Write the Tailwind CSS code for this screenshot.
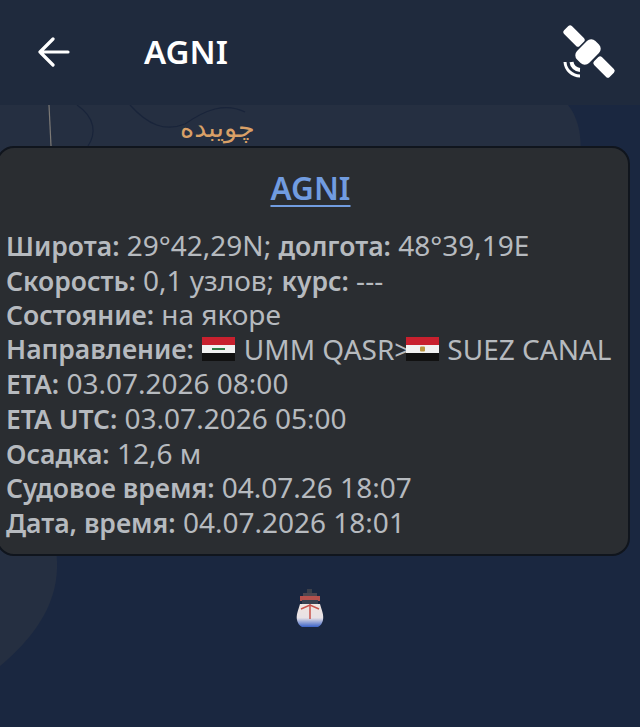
<!DOCTYPE html>
<html lang="ru">
<head>
    <meta charset="UTF-8">
    <meta name="viewport" content="width=device-width, initial-scale=1.0">
    <title>AGNI</title>
    <script src="https://cdn.jsdelivr.net/npm/@tailwindcss/browser@4"></script>
</head>
<body class="bg-[#1a2740] font-['Noto_Sans',sans-serif]">
    <div class="relative w-[640px] h-[727px] overflow-hidden">
        <!-- map -->
        <div class="absolute inset-0">
            <svg class="absolute left-0 top-0" width="640" height="727" viewBox="0 0 640 727" fill="none">
                <path d="M0 105H568C580 120 582 140 580 160L0 160Z" fill="#252f41"/>
                <path d="M0 550H56C60 580 55 620 0 666Z" fill="#252f41"/>
                <path d="M49 105L51 146" stroke="#7d7a76" stroke-width="1.2"/>
                <path d="M77 105C96 118 96 134 88 146" stroke="#19243a" stroke-width="1.2"/>
                <path d="M130 105C148 125 165 132 185 124C205 110 225 102 245 112" stroke="#19243a" stroke-width="1.2"/>
            </svg>
            <span class="absolute left-[180px] top-[111px] text-[27px] leading-[34px] text-[#d9a067] font-['DejaVu_Sans',sans-serif]">چویبده</span>
        </div>

        <!-- top bar -->
        <header class="absolute left-0 top-0 w-full h-[105px] bg-[#1f2a3d] flex items-center pl-[38px] pr-[24px] pb-[2px]">
            <svg width="32" height="30" viewBox="0 0 32 30" fill="none" stroke="white" stroke-width="3.2" stroke-linecap="round" stroke-linejoin="round">
                <path d="M30 15H2M15 2L2 15L15 28"/>
            </svg>
            <h1 class="ml-[74px] text-[33px] leading-none font-semibold text-white">AGNI</h1>
            <svg class="ml-auto" width="54" height="54" viewBox="0 0 54 54" fill="white">
                <rect x="-11" y="-5.500" width="22" height="11" rx="2.500" transform="translate(12 11) rotate(45)"/>
                <rect x="-13" y="-8.500" width="26" height="17" rx="6" transform="translate(26 27) rotate(-45)"/>
                <rect x="-11" y="-5.500" width="22" height="11" rx="2.500" transform="translate(42 42) rotate(45)"/>
                <path d="M3 37A15 15 0 0 0 18 51" fill="none" stroke="white" stroke-width="3"/>
                <path d="M9.500 37A9 9 0 0 0 18 45" fill="none" stroke="white" stroke-width="4"/>
            </svg>
        </header>

        <!-- vessel card -->
        <section class="absolute left-[-4px] top-[146px] w-[634px] h-[410px] rounded-[18px] bg-[#2a2d31] border-2 border-[#10151d] pl-[8px] pt-[18px] text-[#b6babf] text-[28px] leading-[34.600px] whitespace-nowrap">
            <h2 class="text-center pr-[13px] text-[31.500px] leading-[44px] font-semibold text-[#719ce0] underline underline-offset-[5px] decoration-2 mb-[18px]">AGNI</h2>
            <p><b class="text-[26.500px] leading-none font-semibold">Широта:</b> 29°42,29N; <b class="text-[26.500px] leading-none font-semibold">долгота:</b> 48°39,19E</p>
            <p><b class="text-[26.500px] leading-none font-semibold">Скорость:</b> 0,1 узлов; <b class="text-[26.500px] leading-none font-semibold">курс:</b> ---</p>
            <p><b class="text-[26.500px] leading-none font-semibold">Состояние:</b> на якоре</p>
            <p class="flex items-center"><b class="text-[26.500px] leading-none font-semibold">Направление:</b>
                <svg class="ml-[8px] mr-[9px] blur-[0.4px]" width="33" height="24" viewBox="0 0 33 24">
                    <rect width="33" height="8" fill="#c8202e"/><rect y="8" width="33" height="8" fill="#f1f1f1"/><rect y="16" width="33" height="8" fill="#111"/>
                    <rect x="10" y="11" width="13" height="2" fill="#2f7a44"/>
                </svg>
                <span class="mr-[-4px]">UMM QASR&gt;</span>
                <svg class="mr-[8px] blur-[0.4px]" width="33" height="24" viewBox="0 0 33 24">
                    <rect width="33" height="8" fill="#c8202e"/><rect y="8" width="33" height="8" fill="#f1f1f1"/><rect y="16" width="33" height="8" fill="#111"/>
                    <rect x="14" y="9.500" width="5" height="5" rx="1" fill="#b9963f"/>
                </svg>
                <span>SUEZ CANAL</span>
            </p>
            <p><b class="text-[26.500px] leading-none font-semibold">ETA:</b> 03.07.2026 08:00</p>
            <p><b class="text-[26.500px] leading-none font-semibold">ETA UTC:</b> 03.07.2026 05:00</p>
            <p><b class="text-[26.500px] leading-none font-semibold">Осадка:</b> 12,6 м</p>
            <p><b class="text-[26.500px] leading-none font-semibold">Судовое время:</b> 04.07.26 18:07</p>
            <p><b class="text-[26.500px] leading-none font-semibold">Дата, время:</b> 04.07.2026 18:01</p>
        </section>

        <!-- vessel marker -->
        <svg class="absolute left-[294px] top-[587px] blur-[0.6px]" width="32" height="43" viewBox="0 0 32 43">
            <defs>
                <linearGradient id="hull" x1="0" y1="0" x2="0" y2="1">
                    <stop offset="0" stop-color="#f0e4e0"/>
                    <stop offset="0.6" stop-color="#e8e2e6"/>
                    <stop offset="1" stop-color="#3a62c8"/>
                </linearGradient>
            </defs>
            <rect x="13" y="2" width="5" height="4" fill="#3b3f4a"/>
            <rect x="9" y="6" width="14" height="5" fill="#4d4650"/>
            <rect x="6" y="9" width="20" height="5" fill="#b5504c"/>
            <rect x="8" y="13" width="16" height="4" fill="#39404f"/>
            <path d="M6 17H26C28 24 30 28 29 33Q28 38 24 40H8Q4 38 3 33C2 28 4 24 6 17Z" fill="url(#hull)"/>
            <path d="M16 17V32M7 22L16 18L25 22" stroke="#c9524a" stroke-width="1.500" fill="none"/>
        </svg>
    </div>
</body>
</html>
